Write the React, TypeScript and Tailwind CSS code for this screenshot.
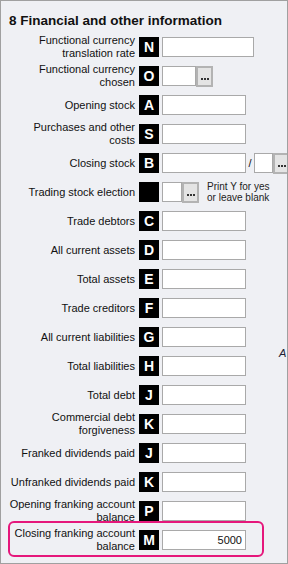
import React from 'react';

type Row = {
  label: string;
  letter: string;
  kind?: 'wide' | 'picker' | 'stock' | 'election';
  value?: string;
};

const rows: Row[] = [
  { label: 'Functional currency translation rate', letter: 'N', kind: 'wide' },
  { label: 'Functional currency chosen', letter: 'O', kind: 'picker' },
  { label: 'Opening stock', letter: 'A' },
  { label: 'Purchases and other costs', letter: 'S' },
  { label: 'Closing stock', letter: 'B', kind: 'stock' },
  { label: 'Trading stock election', letter: '', kind: 'election' },
  { label: 'Trade debtors', letter: 'C' },
  { label: 'All current assets', letter: 'D' },
  { label: 'Total assets', letter: 'E' },
  { label: 'Trade creditors', letter: 'F' },
  { label: 'All current liabilities', letter: 'G' },
  { label: 'Total liabilities', letter: 'H' },
  { label: 'Total debt', letter: 'J' },
  { label: 'Commercial debt forgiveness', letter: 'K' },
  { label: 'Franked dividends paid', letter: 'J' },
  { label: 'Unfranked dividends paid', letter: 'K' },
  { label: 'Opening franking account balance', letter: 'P' },
  { label: 'Closing franking account balance', letter: 'M', value: '5000' },
];

function Ellipsis() {
  return (
    <div className="w-[17px] h-[21px] shrink-0 border-2 border-[#b3b3b3] bg-[#e4e4e4] flex items-end justify-center pb-[5px]">
      <div className="flex gap-[1px]">
        <span className="w-[2px] h-[2px] bg-[#333]" />
        <span className="w-[2px] h-[2px] bg-[#333]" />
        <span className="w-[2px] h-[2px] bg-[#333]" />
      </div>
    </div>
  );
}

function Field({ width, value }: { width: string; value?: string }) {
  return (
    <div className={`${width} h-[20px] shrink-0 bg-white border border-[#a9a9a9] flex items-center justify-end pr-[3px] text-[11px] text-[#111]`}>
      {value}
    </div>
  );
}

function Control({ row }: { row: Row }) {
  if (row.kind === 'wide') return <Field width="w-[92px]" />;
  if (row.kind === 'picker')
    return (
      <div className="flex items-start">
        <Field width="w-[34px]" />
        <Ellipsis />
      </div>
    );
  if (row.kind === 'stock')
    return (
      <div className="flex items-center">
        <Field width="w-[84px]" />
        <span className="w-[8px] text-center text-[11px] text-[#111]">/</span>
        <Field width="w-[19px]" />
        <Ellipsis />
      </div>
    );
  if (row.kind === 'election')
    return (
      <div className="flex items-center">
        <Field width="w-[20px]" />
        <Ellipsis />
        <div className="ml-[8px] text-[10px] leading-[11px] text-[#222] whitespace-nowrap">
          Print Y for yes
          <br />
          or leave blank
        </div>
      </div>
    );
  return <Field width="w-[84px]" value={row.value} />;
}

export default function App() {
  return (
    <div
      className="relative w-[288px] h-[564px] overflow-hidden bg-[#eff0f4] border border-[#a0a0a0] text-[#111]"
      style={{ fontFamily: '"Liberation Sans", Arial, sans-serif' }}
    >
      <div className="h-[31.5px] pt-[12px] pl-[8px] text-[13.5px] leading-[16px] font-bold whitespace-nowrap">
        8 Financial and other information
      </div>

      <div className="flex flex-col">
        {rows.map((row, i) => (
          <div key={i} className="flex items-center h-[29px] pl-[7px]">
            <div className="w-[127px] shrink-0 text-right text-[11px] leading-[13px]">{row.label}</div>
            <div className="ml-[4px] w-[20px] h-[20px] shrink-0 bg-black text-white font-bold text-[14px] leading-[20px] text-center">
              {row.letter}
            </div>
            <div className="ml-[3px]">
              <Control row={row} />
            </div>
          </div>
        ))}
      </div>

      {/* cut-off text from the next column */}
      <span className="absolute left-[278px] top-[344px] text-[11px] italic text-[#223]">A</span>

      {/* highlight */}
      <div className="absolute left-[7px] top-[520px] w-[256px] h-[36px] border-2 border-[#e5177b] rounded-[6px] pointer-events-none" />
    </div>
  );
}
